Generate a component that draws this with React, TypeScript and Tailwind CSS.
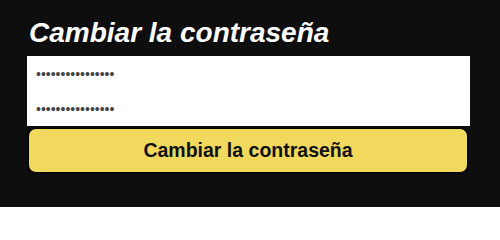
import React from 'react';

export default function App() {
  return (
    <div className="w-[500px] h-[207px] bg-[#0e0e0e] font-['Liberation_Sans',Arial,sans-serif]">
      <div className="ml-[27px] w-[443px] pt-[17px]">
        <h1 className="text-[28px] leading-[32px] font-bold italic text-white pl-[2px]">
          Cambiar la contraseña
        </h1>
        <div className="mt-[7px] bg-white flex flex-col">
          <input
            type="password"
            defaultValue="contraseña123456"
            readOnly
            className="h-[35px] pl-[9px] text-[14px] text-[#444] bg-white outline-none"
          />
          <input
            type="password"
            defaultValue="contraseña123456"
            readOnly
            className="h-[35px] pl-[9px] text-[14px] text-[#444] bg-white outline-none"
          />
        </div>
        <button className="mt-[2px] ml-px w-[440px] h-[45px] rounded-[8px] border border-black bg-[#f0d95c] text-[19.5px] font-bold text-[#111] shadow-[0_0_2px_#000]">
          Cambiar la contraseña
        </button>
      </div>
    </div>
  );
}
